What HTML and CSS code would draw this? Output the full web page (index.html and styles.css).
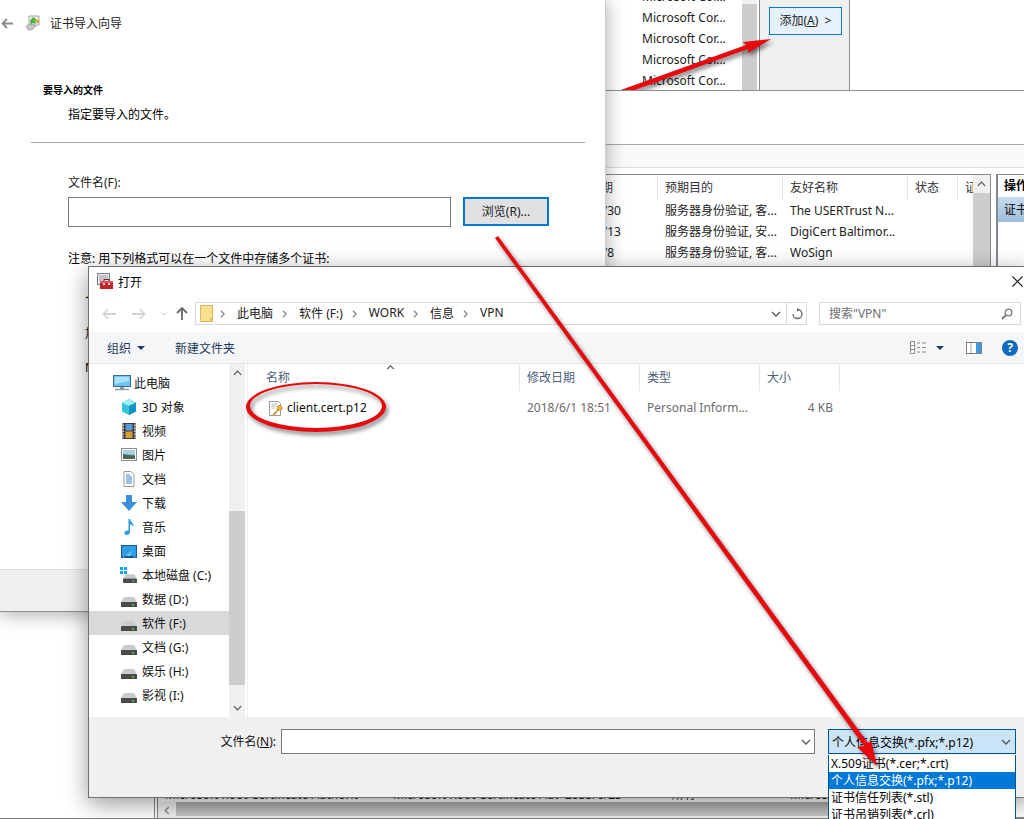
FILE: index.html
```html
<!DOCTYPE html>
<html lang="zh">
<head>
    <meta charset="UTF-8">
    <title>证书导入向导</title>
    <link rel="stylesheet" href="styles.css">
</head>
<body>
    <!-- 图标 -->
    <svg class="icon-defs" width="0" height="0">
        <symbol id="i-chev" viewBox="0 0 6 10"><path d="M1 1l4 4-4 4" fill="none" stroke="#8a8a8a" stroke-width="1.6"/></symbol>
        <symbol id="i-down" viewBox="0 0 10 6"><path d="M1 1l4 4 4-4" fill="none" stroke="#555" stroke-width="1.3"/></symbol>
        <symbol id="i-pc" viewBox="0 0 18 16"><rect x="0.5" y="0.5" width="17" height="11" fill="#6cc4f5" stroke="#3f6d8f"/><path d="M2 2h14v4L2 9z" fill="#a8e2fb"/><path d="M7 12h4v2H7z" fill="#8a99a6"/><path d="M2 14.500h14" stroke="#8a99a6" stroke-width="1.4"/></symbol>
        <symbol id="i-cube" viewBox="0 0 16 16"><path d="M8 0l7 3.500v9L8 16l-7-3.500v-9z" fill="#35c4d8"/><path d="M8 0l7 3.500L8 7 1 3.500z" fill="#9eecf5"/><path d="M8 7l7-3.500v9L8 16z" fill="#1593c4"/></symbol>
        <symbol id="i-film" viewBox="0 0 16 16"><rect x="1.500" width="13" height="16" fill="#3c3c3c"/><rect x="4.500" y="1" width="7" height="6.500" fill="#5b9bd5"/><rect x="4.500" y="8.500" width="7" height="6.500" fill="#d9a030"/><path d="M2.500 1.500v13M13.500 1.500v13" stroke="#ddd" stroke-dasharray="1.500 1.500"/></symbol>
        <symbol id="i-pic" viewBox="0 0 16 14"><rect x="0.500" y="0.500" width="15" height="12" fill="#fff" stroke="#8f8f8f"/><rect x="2" y="2" width="12" height="4.500" fill="#a9cfe8"/><path d="M2 6.500h12V11H2z" fill="#6d8f7d"/><path d="M2 6l5 1 7 1v3H2z" fill="#49685c"/></symbol>
        <symbol id="i-doc" viewBox="0 0 16 16"><path d="M3 .5h7l3 3v12H3z" fill="#fff" stroke="#9a9a9a"/><path d="M5 4h4M5 6h6M5 8h6M5 10h6M5 12h6" stroke="#3d86c6"/></symbol>
        <symbol id="i-dl" viewBox="0 0 16 16"><path d="M5 0h6v7h5l-8 9-8-9h5z" fill="#3a8fdc"/></symbol>
        <symbol id="i-note" viewBox="0 0 16 16"><path d="M7.500 0h1.500c.5 3 4 4 3.500 8-1-2-2.500-2.500-3.500-2.700V13c0 2-1.800 3-3.500 3S3.500 15 3.500 13.700s1.600-2.700 4-2.200z" fill="#2c9be6"/></symbol>
        <symbol id="i-desk" viewBox="0 0 16 13"><rect width="16" height="13" fill="#14598f"/><rect x="1" y="1" width="14" height="10" fill="#2d9fe8"/><path d="M5 11l6-6-2 6z" fill="#6cc8f7"/><path d="M2 12h1M13 12h1" stroke="#fff"/></symbol>
        <symbol id="i-drive" viewBox="0 0 16 10"><path d="M3 0h10l3 5H0z" fill="#c8ccd0"/><rect y="5" width="16" height="5" rx="0.500" fill="#4a4a4a"/><rect x="11" y="7" width="2" height="1.500" fill="#3fe04a"/></symbol>
        <symbol id="i-win" viewBox="0 0 7 7"><path d="M0 0h3v3H0zM4 0h3v3H4zM0 4h3v3H0zM4 4h3v3H4z" fill="#10a5f0"/></symbol>
    </svg>

    <!-- 添加管理单元窗口 -->
    <div class="window snap-window">
        <div class="snap-list">
            <div class="snap-row">Microsoft Cor...</div>
            <div class="snap-row">Microsoft Cor...</div>
            <div class="snap-row">Microsoft Cor...</div>
            <div class="snap-row">Microsoft Cor...</div>
            <div class="snap-row">Microsoft Cor...</div>
        </div>
        <div class="snap-scroll"><div class="snap-thumb"></div></div>
        <div class="snap-actions">
            <div class="add-button">添加(<u>A</u>) &nbsp;&gt;</div>
        </div>
        <svg class="snap-arrow" width="170" height="91" viewBox="606 0 170 91">
            <polygon points="771,39 743,42 746,45 618,91 632,91 748,49 748,53" fill="#e8090f"/>
        </svg>
    </div>

    <!-- 证书控制台 -->
    <div class="window console-window">
        <div class="console-head"></div>
        <div class="console-bar"></div>
        <div class="console-body">
            <div class="tree-pane"></div>
            <div class="cert-list">
                <div class="cert-main">
                    <div class="cert-table">
                        <div class="cert-rows">
                            <div class="cert-row cert-header">
                                <div class="cell"></div><div class="cell"></div>
                                <div class="cell">到期日期</div>
                                <div class="cell">预期目的</div><div class="cell">友好名称</div>
                                <div class="cell">状态</div><div class="cell">证书模板</div>
                            </div>
                            <div class="cert-row">
                                <div class="cell"></div><div class="cell"></div>
                                <div class="cell date-cell">2028/1/30</div>
                                <div class="cell">服务器身份验证, 客...</div><div class="cell">The USERTrust N...</div>
                                <div class="cell"></div><div class="cell"></div>
                            </div>
                            <div class="cert-row">
                                <div class="cell"></div><div class="cell"></div>
                                <div class="cell date-cell">2025/5/13</div>
                                <div class="cell">服务器身份验证, 安...</div><div class="cell">DigiCert Baltimor...</div>
                                <div class="cell"></div><div class="cell"></div>
                            </div>
                            <div class="cert-row">
                                <div class="cell"></div><div class="cell"></div>
                                <div class="cell date-cell">2039/8/8</div>
                                <div class="cell">服务器身份验证, 客...</div><div class="cell">WoSign</div>
                                <div class="cell"></div><div class="cell"></div>
                            </div>
                        </div>
                        <div class="cert-row cert-cut">
                            <div class="cell">Microsoft Root Certificate Authority</div>
                            <div class="cell cell-indent">Microsoft Root Certificate Auth</div>
                            <div class="cell">2035/6/23</div>
                            <div class="cell">&lt;所有&gt;</div>
                            <div class="cell">Microsoft Root</div>
                            <div class="cell"></div><div class="cell"></div>
                        </div>
                    </div>
                    <div class="cert-scroll">
                        <div class="scroll-cap"><svg width="9" height="6"><use href="#i-down" transform="matrix(1 0 0 -1 0 6)"/></svg></div>
                        <div class="cert-thumb"></div>
                    </div>
                </div>
                <div class="cert-hscroll">
                    <div class="hscroll-cap"><svg width="6" height="9"><use href="#i-chev" transform="matrix(-1 0 0 1 6 0)"/></svg></div>
                    <div class="hscroll-thumb"></div>
                </div>
            </div>
            <div class="action-pane">
                <div class="action-head">操作</div>
                <div class="action-row">证书</div>
            </div>
        </div>
    </div>

    <!-- 证书导入向导 -->
    <div class="window wizard-window">
        <div class="wizard-title">
            <svg class="wizard-back" width="12" height="11" viewBox="0 0 12 11"><path d="M6 1L1.500 5.500 6 10M2 5.500h10" fill="none" stroke="#8c8c8c" stroke-width="1.800"/></svg>
            <svg width="15" height="16" viewBox="0 0 15 16"><path d="M4 1h10v9H4z" fill="#eee" stroke="#a8a8a8"/><path d="M8 2l4 3-2 1 1 3-3-1-2 2-1-4z" fill="#4bb33c"/><rect x="11" y="5" width="3" height="3" fill="#e0a526"/><path d="M1 11l4-2 6 2-4 4H3z" fill="#c4c8cc" stroke="#8c8c8c" stroke-width=".6"/></svg>
            <span>证书导入向导</span>
        </div>
        <div class="wizard-content">
            <h1 class="wizard-heading">要导入的文件</h1>
            <p class="wizard-sub">指定要导入的文件。</p>
            <div class="wizard-rule"></div>
            <div class="wizard-form">
                <label class="wizard-label">文件名(F):</label>
                <div class="wizard-field">
                    <div class="text-box wizard-input"></div>
                    <div class="browse-button">浏览(R)...</div>
                </div>
                <p class="wizard-note">注意: 用下列格式可以在一个文件中存储多个证书:</p>
                <div class="wizard-formats">
                    <div>个人信息交换- PKCS #12 (.PFX,.P12)</div>
                    <div>加密消息语法标准- PKCS #7 证书(.P7B)</div>
                    <div>Microsoft 序列化证书存储(.SST)</div>
                </div>
            </div>
        </div>
        <div class="wizard-footer"></div>
    </div>

    <!-- 打开对话框 -->
    <div class="window open-dialog">
        <div class="dlg-title">
            <svg width="17" height="17" viewBox="0 0 17 17"><rect x="0.500" y="0.500" width="12" height="11" fill="#e8e8ec" stroke="#7a7f88"/><path d="M2 3h9M2 5h9M2 7h5" stroke="#9aa0aa"/><rect x="3" y="8" width="13" height="8" fill="#c0272d"/><rect x="3" y="8" width="13" height="2" fill="#e0565a"/><path d="M7 8V6.500h5V8" fill="none" stroke="#7a1a1e"/><rect x="6" y="10" width="2" height="2" fill="#f4c9c9"/><rect x="11" y="10" width="2" height="2" fill="#f4c9c9"/></svg>
            <span class="dlg-title-text">打开</span>
            <svg class="dlg-close" width="11" height="11" viewBox="0 0 11 11"><path d="M.5.500l10 10M10.500.500l-10 10" stroke="#1a1a1a" stroke-width="1.100"/></svg>
        </div>

        <div class="dlg-nav">
            <div class="nav-buttons">
                <svg width="14" height="12" viewBox="0 0 14 12"><path d="M6 1L1.500 6 6 11M2 6h12" fill="none" stroke="#d4d4d4" stroke-width="1.800"/></svg>
                <svg width="14" height="12" viewBox="0 0 14 12"><path d="M8 1l4.500 5L8 11M12 6H0" fill="none" stroke="#d4d4d4" stroke-width="1.800"/></svg>
                <svg class="nav-drop" width="6" height="4" viewBox="0 0 6 4"><path d="M.5.500L3 3 5.500.500" fill="none" stroke="#c8c8c8"/></svg>
                <svg width="12" height="13" viewBox="0 0 12 13"><path d="M1 6l5-5 5 5M6 1.500V13" fill="none" stroke="#6a6a6a" stroke-width="1.800"/></svg>
            </div>
            <div class="address-box">
                <svg class="folder" width="13" height="18" viewBox="0 0 13 18"><path d="M.5.500h12v16H.5z" fill="#fbe08f" stroke="#d8b95c"/><rect x="10" y="13" width="3" height="4" fill="#e5c25c"/></svg>
                <svg class="crumb-chev" width="5" height="8"><use href="#i-chev"/></svg><span>此电脑</span>
                <svg class="crumb-chev" width="5" height="8"><use href="#i-chev"/></svg><span>软件 (F:)</span>
                <svg class="crumb-chev" width="5" height="8"><use href="#i-chev"/></svg><span>WORK</span>
                <svg class="crumb-chev" width="5" height="8"><use href="#i-chev"/></svg><span>信息</span>
                <svg class="crumb-chev" width="5" height="8"><use href="#i-chev"/></svg><span>VPN</span>
                <svg class="address-drop" width="10" height="6"><use href="#i-down"/></svg>
                <div class="address-refresh">
                    <svg width="12" height="12" viewBox="0 0 12 12"><path d="M6.500 1.500A4.500 4.500 0 1 1 2 6" fill="none" stroke="#666" stroke-width="1.300"/><path d="M6 0l3 1.800L6 3.500z" fill="#666"/></svg>
                </div>
            </div>
            <div class="search-box">
                <span>搜索"VPN"</span>
                <svg width="12" height="12" viewBox="0 0 12 12"><circle cx="7.500" cy="4.500" r="3.300" fill="none" stroke="#777" stroke-width="1.300"/><path d="M5 7L1 11" stroke="#777" stroke-width="1.800"/></svg>
            </div>
        </div>

        <div class="dlg-toolbar">
            <span class="tool-item">组织<i class="caret"></i></span>
            <span class="tool-item tool-new">新建文件夹</span>
            <div class="tool-right">
                <svg width="17" height="13" viewBox="0 0 17 13"><path d="M.5.500h4v12h-4zM.5 4.500h4M.5 8.500h4" fill="#fff" stroke="#8a8a8a"/><path d="M7 2h3M12 2h4M7 6.500h3M12 6.500h4M7 11h3M12 11h4" stroke="#8a8a8a"/></svg>
                <i class="caret caret-view"></i>
                <svg class="pane-icon" width="16" height="12" viewBox="0 0 16 12"><rect x="0.500" y="0.500" width="15" height="11" fill="#fff" stroke="#7f7f7f"/><rect x="10" y="1" width="5" height="10" fill="#3f97e0"/><path d="M5 1v10" stroke="#aaa"/></svg>
                <span class="help-icon">?</span>
            </div>
        </div>

        <div class="dlg-main">
            <div class="nav-pane">
                <div class="nav-row nav-root"><svg width="18" height="16"><use href="#i-pc"/></svg><span>此电脑</span></div>
                <div class="nav-row"><svg width="16" height="16"><use href="#i-cube"/></svg><span>3D 对象</span></div>
                <div class="nav-row"><svg width="16" height="16"><use href="#i-film"/></svg><span>视频</span></div>
                <div class="nav-row"><svg width="16" height="14"><use href="#i-pic"/></svg><span>图片</span></div>
                <div class="nav-row"><svg width="16" height="16"><use href="#i-doc"/></svg><span>文档</span></div>
                <div class="nav-row"><svg width="16" height="16"><use href="#i-dl"/></svg><span>下载</span></div>
                <div class="nav-row"><svg width="16" height="16"><use href="#i-note"/></svg><span>音乐</span></div>
                <div class="nav-row"><svg width="16" height="13"><use href="#i-desk"/></svg><span>桌面</span></div>
                <div class="nav-row">
                    <span class="drive-c"><svg class="drive-win" width="7" height="7"><use href="#i-win"/></svg><svg class="drive-low" width="14" height="9"><use href="#i-drive"/></svg></span>
                    <span>本地磁盘 (C:)</span>
                </div>
                <div class="nav-row"><svg class="drive-low" width="16" height="10"><use href="#i-drive"/></svg><span>数据 (D:)</span></div>
                <div class="nav-row nav-selected"><svg class="drive-low" width="16" height="10"><use href="#i-drive"/></svg><span>软件 (F:)</span></div>
                <div class="nav-row"><svg class="drive-low" width="16" height="10"><use href="#i-drive"/></svg><span>文档 (G:)</span></div>
                <div class="nav-row"><svg class="drive-low" width="16" height="10"><use href="#i-drive"/></svg><span>娱乐 (H:)</span></div>
                <div class="nav-row"><svg class="drive-low" width="16" height="10"><use href="#i-drive"/></svg><span>影视 (I:)</span></div>
            </div>
            <div class="nav-scroll">
                <div class="nav-scroll-btn"><svg width="9" height="6"><use href="#i-down" transform="matrix(1 0 0 -1 0 6)"/></svg></div>
                <div class="nav-scroll-thumb"></div>
                <div class="nav-scroll-btn nav-scroll-end"><svg width="9" height="6"><use href="#i-down"/></svg></div>
            </div>
            <div class="file-pane">
                <svg class="sort-mark" width="9" height="5"><use href="#i-down" transform="matrix(1 0 0 -1 0 5)"/></svg>
                <div class="file-grid file-head">
                    <div class="file-cell file-name-head">名称</div>
                    <div class="file-cell">修改日期</div>
                    <div class="file-cell">类型</div>
                    <div class="file-cell">大小</div>
                    <div class="file-cell file-rest"></div>
                </div>
                <div class="file-grid file-row">
                    <div class="file-cell file-name">
                        <svg width="16" height="17" viewBox="0 0 16 17"><path d="M1.500 1.500h9l2 2v12h-11z" fill="#fff" stroke="#9a9a9a"/><path d="M3.500 4h6M3.500 6h5M3.500 8h3" stroke="#b8b8b8"/><circle cx="11.500" cy="8" r="2.500" fill="#f0b93a" stroke="#a87a1c" stroke-width=".7"/><path d="M10 10l-5 5M6.500 12.500l1.500 1.500M5 14l1 1" stroke="#c98f22" stroke-width="1.500"/></svg>
                        <span>client.cert.p12</span>
                    </div>
                    <div class="file-cell file-meta">2018/6/1 18:51</div>
                    <div class="file-cell file-meta">Personal Inform...</div>
                    <div class="file-cell file-meta file-size">4 KB</div>
                </div>
            </div>
        </div>

        <div class="dlg-footer">
            <label class="name-label">文件名(<u>N</u>):</label>
            <div class="text-box name-input"><svg width="10" height="6"><use href="#i-down"/></svg></div>
            <div class="filter-wrap">
                <div class="filter-box"><span>个人信息交换(*.pfx;*.p12)</span><svg width="10" height="6"><use href="#i-down"/></svg></div>
                <div class="filter-menu">
                    <div class="filter-item">X.509证书(*.cer;*.crt)</div>
                    <div class="filter-item filter-on">个人信息交换(*.pfx;*.p12)</div>
                    <div class="filter-item">证书信任列表(*.stl)</div>
                    <div class="filter-item">证书吊销列表(*.crl)</div>
                </div>
            </div>
        </div>
    </div>

    <!-- 红色标注 -->
    <svg class="marks" width="1024" height="819" viewBox="0 0 1024 819">
        <path d="M246 407a70 25 0 1 0 140 0a70 25 0 1 0-140 0zM250 406a66 22 0 1 1 132 0a66 22 0 1 1-132 0z" fill="#e8090f" fill-rule="evenodd"/>
        <polygon points="877,766 871,740 868,743 498,236 495,238 864,746 857,747" fill="#e8090f"/>
    </svg>
</body>
</html>
```

FILE: styles.css
```css
/* 页面整体 */
html, body {
    margin: 0;
    height: 100%;
}
body {
    width: 1024px;
    height: 819px;
    position: relative;
    overflow: hidden;
    background: #fff;
    font-family: "Noto Sans", "Noto Sans CJK SC", sans-serif;
    font-size: 12px;
    color: #000;
}
.icon-defs {
    position: absolute;
}
.window {
    position: absolute;
    box-sizing: border-box;
}
svg {
    display: block;
    flex: none;
}
.text-box {
    box-sizing: border-box;
    background: #fff;
    border: 1px solid #7a7a7a;
}

/* 添加管理单元窗口 */
.snap-window {
    left: 606px;
    top: 0;
    width: 418px;
    height: 91px;
    display: flex;
    overflow: hidden;
    background: #fff;
}
.snap-list {
    width: 136px;
    padding-left: 36px;
    box-sizing: border-box;
    display: flex;
    flex-direction: column;
    justify-content: flex-end;
    color: #222;
}
.snap-row {
    flex: none;
    height: 21px;
    line-height: 21px;
    white-space: nowrap;
}
.snap-scroll {
    width: 15px;
    background: #f0f0f0;
    padding-top: 4px;
    box-sizing: border-box;
}
.snap-thumb {
    height: 100%;
    background: #cdcdcd;
}
.snap-actions {
    width: 91px;
    margin-left: 2px;
    box-sizing: border-box;
    border-left: 1px solid #8c8c94;
    border-right: 1px solid #8c8c94;
    background: #f0f0f0;
    padding: 7px 8px 0 9px;
}
.add-button {
    box-sizing: border-box;
    width: 73px;
    height: 28px;
    line-height: 26px;
    border: 1px solid #0078d7;
    background: #e5f1fb;
    text-align: center;
    color: #222;
}
.add-button u {
    text-underline-offset: 1px;
}
.snap-arrow {
    position: absolute;
    left: 0;
    top: 0;
    filter: drop-shadow(2px 3px 2px rgba(0,0,0,0.5));
}

/* 证书控制台 */
.console-window {
    left: 0;
    top: 90px;
    width: 1024px;
    height: 729px;
    background: #fff;
    border-top: 1px solid #8e8e8e;
    border-bottom: 1px solid #828282;
    display: flex;
    flex-direction: column;
}
.console-head {
    height: 53px;
    border-bottom: 1px solid #a8a8a8;
}
.console-bar {
    height: 22px;
    background: #f9f9f9;
    border-bottom: 1px solid #dcdcdc;
}
.console-body {
    flex: 1;
    display: flex;
    padding-top: 6px;
    min-height: 0;
}
.tree-pane {
    width: 154px;
    flex: none;
    border-right: 1px solid #828790;
    margin-top: 624px;
}
.cert-list {
    width: 834px;
    flex: none;
    margin-left: 2px;
    box-sizing: border-box;
    border: 1px solid #828790;
    border-bottom: 0;
    display: flex;
    flex-direction: column;
    min-height: 0;
}
.cert-main {
    flex: 1;
    display: flex;
    min-height: 0;
}
.cert-table {
    flex: 1;
    min-width: 0;
    overflow: hidden;
    display: flex;
    flex-direction: column;
    justify-content: space-between;
}
.cert-row {
    display: grid;
    grid-template-columns: 200px 200px 100px 125px 125px 50px 30px;
    height: 21px;
    line-height: 21px;
    color: #222;
}
.cell {
    padding-left: 7px;
    white-space: nowrap;
    overflow: hidden;
}
.cert-header {
    height: 25px;
    line-height: 25px;
    color: #333;
}
.cert-header .cell {
    border-right: 1px solid #e5e5e5;
    box-sizing: border-box;
}
.cert-header .cell:last-child {
    border-right: 0;
}
.date-cell {
    padding-left: 6px;
}
.cert-cut {
    height: 14px;
    line-height: 14px;
    flex: none;
}
.cell-indent {
    padding-left: 35px;
}
.cert-scroll {
    width: 17px;
    flex: none;
    background: #f0f0f0;
    display: flex;
    flex-direction: column;
}
.scroll-cap {
    height: 18px;
    display: flex;
    align-items: center;
    justify-content: center;
}
.cert-thumb {
    flex: 1;
    background: #cdcdcd;
}
.cert-hscroll {
    height: 16px;
    flex: none;
    display: flex;
    background: #f0f0f0;
}
.hscroll-cap {
    width: 18px;
    display: flex;
    align-items: center;
    justify-content: center;
}
.hscroll-thumb {
    flex: 1;
    margin-bottom: 2px;
    background: linear-gradient(#aaa, #c8c8c8);
}
.action-pane {
    width: 60px;
    flex: none;
    margin-left: 5px;
    box-sizing: border-box;
    border: 1px solid #828790;
    border-left: 2px solid #828790;
    white-space: nowrap;
}
.action-head {
    height: 22px;
    line-height: 22px;
    padding-left: 6px;
    font-weight: bold;
}
.action-row {
    height: 25px;
    line-height: 25px;
    padding-left: 6px;
    background: linear-gradient(#c6d9ec, #9fbfdd);
}

/* 证书导入向导 */
.wizard-window {
    left: 0;
    top: 0;
    width: 606px;
    height: 612px;
    background: #fff;
    border-right: 1px solid #cfcfcf;
    border-bottom: 1px solid #8f8f8f;
    box-shadow: 0 2px 18px rgba(0,0,0,0.35);
    display: flex;
    flex-direction: column;
}
.wizard-title {
    height: 46px;
    display: flex;
    align-items: center;
    padding-left: 1px;
    color: #222;
}
.wizard-back {
    margin-right: 12px;
}
.wizard-title span {
    margin-left: 10px;
}
.wizard-content {
    flex: 1;
    min-height: 0;
    padding-top: 36px;
}
.wizard-heading {
    margin: 0 0 0 43px;
    font-size: 10px;
    line-height: 16px;
    font-weight: bold;
}
.wizard-sub {
    margin: 9px 0 0 68px;
    line-height: 16px;
}
.wizard-rule {
    margin: 19px 20px 0 31px;
    height: 1px;
    background: #a8a8a8;
}
.wizard-form {
    padding: 32px 0 0 68px;
}
.wizard-label {
    display: block;
    line-height: 16px;
    color: #222;
}
.wizard-field {
    display: flex;
    margin-top: 6px;
    gap: 12px;
}
.wizard-input {
    width: 383px;
    height: 30px;
}
.browse-button {
    box-sizing: border-box;
    width: 86px;
    height: 29px;
    line-height: 25px;
    text-align: center;
    background: #e1e1e1;
    border: 2px solid #0078d7;
    color: #222;
}
.wizard-note {
    margin: 24px 0 0;
    line-height: 16px;
}
.wizard-formats {
    padding-left: 17px;
    margin-top: 16px;
    line-height: 34px;
}
.wizard-footer {
    height: 41px;
    background: #f0f0f0;
    border-top: 1px solid #dfdfdf;
}

/* 打开对话框 */
.open-dialog {
    left: 88px;
    top: 266px;
    width: 942px;
    height: 532px;
    background: #fff;
    border: 1px solid #707070;
    box-shadow: 0 6px 22px rgba(0,0,0,0.4);
    display: flex;
    flex-direction: column;
}
.dlg-title {
    height: 29px;
    display: flex;
    align-items: center;
    padding-left: 8px;
    flex: none;
}
.dlg-title-text {
    margin-left: 4px;
    flex: 1;
}
.dlg-close {
    margin-right: 6px;
}
.dlg-nav {
    height: 36px;
    flex: none;
    display: flex;
    box-sizing: border-box;
    padding-top: 6px;
}
.nav-buttons {
    width: 106px;
    box-sizing: border-box;
    height: 23px;
    padding-left: 13px;
    display: flex;
    align-items: center;
}
.nav-buttons svg {
    margin-right: 16px;
}
.nav-buttons .nav-drop {
    margin-right: 9px;
    margin-left: -1px;
}
.address-box {
    box-sizing: border-box;
    width: 612px;
    height: 23px;
    border: 1px solid #d9d9d9;
    display: flex;
    align-items: center;
    padding-left: 4px;
    color: #222;
}
.address-box span,
.search-box span {
    margin-top: -2px;
}
.crumb-chev {
    margin: 0 12px 0 9px;
}
.folder + .crumb-chev {
    margin-left: 7px;
}
.address-drop {
    margin-left: auto;
    margin-right: 5px;
}
.address-refresh {
    width: 20px;
    height: 100%;
    box-sizing: border-box;
    border-left: 1px solid #d9d9d9;
    display: flex;
    align-items: center;
    justify-content: center;
}
.search-box {
    box-sizing: border-box;
    width: 202px;
    height: 23px;
    margin-left: 12px;
    border: 1px solid #d9d9d9;
    display: flex;
    align-items: center;
    justify-content: space-between;
    padding: 0 7px 0 9px;
    color: #6d6d6d;
}
.dlg-toolbar {
    height: 32px;
    flex: none;
    box-sizing: border-box;
    background: #f5f6f7;
    border-bottom: 1px solid #e5e5e5;
    display: flex;
    align-items: center;
    padding-left: 18px;
    color: #1e3a5f;
}
.tool-item {
    display: flex;
    align-items: center;
}
.tool-new {
    margin-left: 30px;
}
.caret {
    display: block;
    width: 0;
    height: 0;
    margin-left: 6px;
    border: 4px solid transparent;
    border-top: 4px solid #1e3a5f;
    border-bottom: 0;
}
.tool-right {
    margin-left: auto;
    margin-right: 11px;
    display: flex;
    align-items: center;
}
.caret-view {
    margin-left: 9px;
    margin-right: 22px;
}
.help-icon {
    margin-left: 20px;
    width: 16px;
    height: 16px;
    border-radius: 50%;
    background: #0f6cbd;
    color: #fff;
    text-align: center;
    line-height: 16px;
    font-weight: bold;
}
.dlg-main {
    flex: 1;
    display: flex;
    min-height: 0;
}
.nav-pane {
    width: 140px;
    padding-top: 7px;
    box-sizing: border-box;
}
.nav-row {
    height: 24px;
    display: flex;
    align-items: center;
    gap: 5px;
    padding-left: 32px;
    white-space: nowrap;
    color: #111;
}
.nav-root {
    padding-left: 24px;
    gap: 3px;
}
.nav-selected {
    background: #d9d9d9;
}
.drive-low {
    margin-top: 5px;
}
.drive-c {
    position: relative;
    width: 16px;
    height: 16px;
    flex: none;
}
.drive-win {
    position: absolute;
    left: -1px;
    top: 0;
}
.drive-c .drive-low {
    position: absolute;
    left: 2px;
    top: 2px;
}
.nav-scroll {
    width: 16px;
    background: #f0f0f0;
    display: flex;
    flex-direction: column;
}
.nav-scroll-btn {
    height: 18px;
    display: flex;
    align-items: center;
    justify-content: center;
}
.nav-scroll-thumb {
    height: 174px;
    margin-top: 129px;
    background: #cdcdcd;
}
.nav-scroll-end {
    margin-top: auto;
}
.file-pane {
    flex: 1;
    position: relative;
    margin-left: 2px;
    border-left: 1px solid #f0f0f0;
}
.sort-mark {
    position: absolute;
    left: 138px;
    top: 1px;
}
.file-grid {
    display: grid;
    grid-template-columns: 272px 120px 120px 80px 1fr;
}
.file-head {
    height: 27px;
    line-height: 27px;
    color: #4c607a;
}
.file-head .file-cell {
    border-right: 1px solid #e5e5e5;
    box-sizing: border-box;
}
.file-head .file-rest {
    border-right: 0;
}
.file-cell {
    padding-left: 7px;
    white-space: nowrap;
}
.file-name-head {
    padding-left: 18px;
}
.file-row {
    margin-top: 6px;
    height: 22px;
    line-height: 22px;
}
.file-name {
    display: flex;
    align-items: center;
    gap: 3px;
    padding-left: 20px;
    color: #111;
}
.file-meta {
    color: #6d6d6d;
}
.file-size {
    text-align: right;
    padding-right: 7px;
}
.dlg-footer {
    height: 80px;
    flex: none;
    box-sizing: border-box;
    background: #f0f0f0;
    padding-top: 12px;
    display: flex;
    align-items: flex-start;
}
.name-label {
    width: 187px;
    height: 25px;
    line-height: 25px;
    text-align: right;
    color: #111;
}
.name-input {
    width: 534px;
    height: 25px;
    margin-left: 5px;
    display: flex;
    align-items: center;
    justify-content: flex-end;
    padding-right: 3px;
}
.filter-wrap {
    position: relative;
    width: 188px;
    margin-left: 13px;
}
.filter-box {
    box-sizing: border-box;
    height: 25px;
    background: #cce4f7;
    border: 1px solid #005499;
    display: flex;
    align-items: center;
    justify-content: space-between;
    padding: 0 4px 0 3px;
}
.filter-menu {
    position: absolute;
    left: 0;
    top: 26px;
    width: 100%;
    box-sizing: border-box;
    background: #fff;
    border-left: 1px solid #005499;
    border-right: 1px solid #005499;
}
.filter-item {
    height: 17px;
    line-height: 17px;
    padding-left: 2px;
    white-space: nowrap;
}
.filter-on {
    background: #0078d7;
    color: #fff;
}

/* 红色标注 */
.marks {
    position: absolute;
    left: 0;
    top: 0;
    pointer-events: none;
    filter: drop-shadow(2px 3px 2px rgba(0,0,0,0.5));
}
```
